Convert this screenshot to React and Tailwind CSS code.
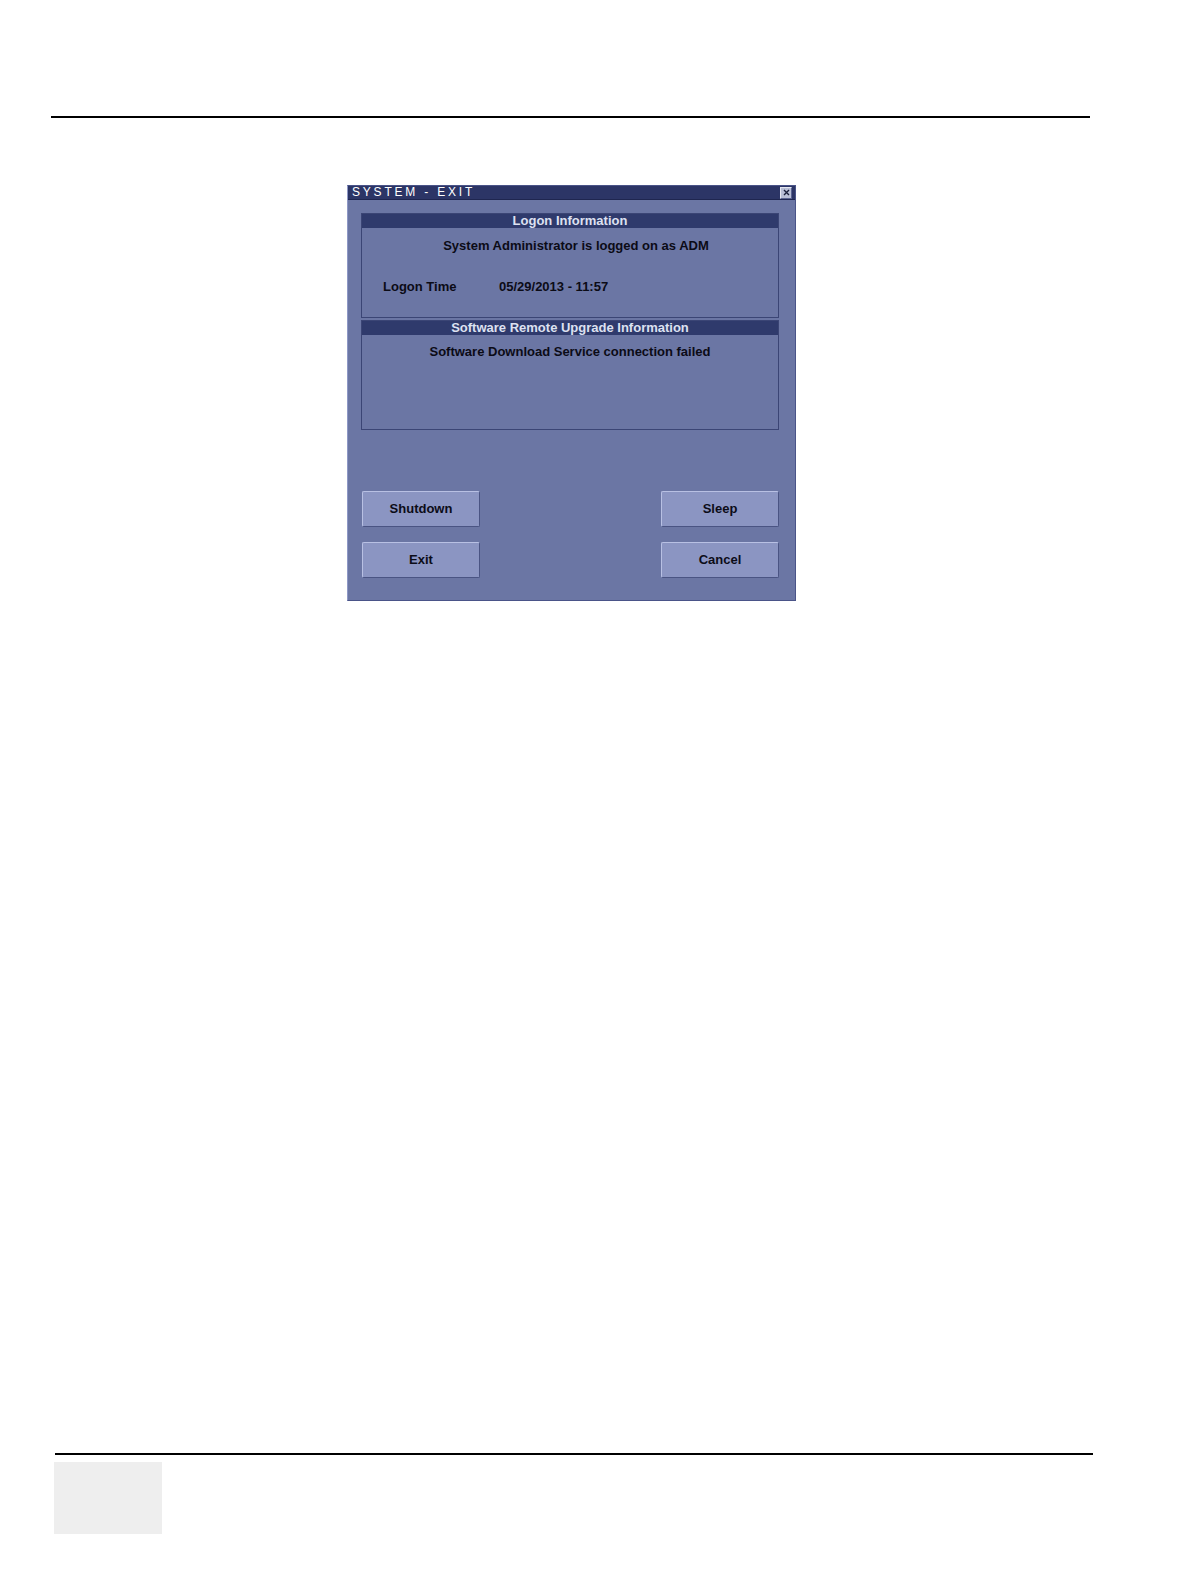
export default function App() {
  const font = { fontFamily: '"Liberation Sans", Arial, sans-serif' };

  const Section = ({ title, h, children }) => (
    <div className={`w-[418px] ${h} border border-[#3b4575] bg-[#6b76a4] flex flex-col`}>
      <div className="h-[14px] bg-[#2f3a6c] text-[#dde1f1] text-[13px] font-bold leading-[14px] text-center">
        {title}
      </div>
      {children}
    </div>
  );

  const Btn = ({ label }) => (
    <div className="w-[118px] h-[36px] bg-[#8b95c2] border border-t-[#b8c0e3] border-l-[#b8c0e3] border-r-[#4a5483] border-b-[#4a5483] rounded-[2px] flex items-center justify-center text-[13px] font-bold text-[#0c0c18]">
      {label}
    </div>
  );

  return (
    <div className="w-[1190px] h-[1584px] bg-white flex flex-col" style={font}>
      {/* header rule */}
      <div className="mt-[116px] ml-[51px] w-[1039px] h-[2px] bg-black" />

      {/* dialog */}
      <div className="mt-[67px] ml-[347px] w-[449px] h-[416px] border border-[#4a5488] border-l-[#8f98c6] bg-[#6b76a4] flex flex-col">
        <div className="h-[14px] bg-[#2c3566] border-b border-[#1f2650] flex items-center justify-between pl-[4px] pr-[3px]">
          <span className="text-white text-[12px] font-medium leading-[13px] tracking-[2.8px]">SYSTEM - EXIT</span>
          <span className="w-[12px] h-[12px] bg-[#b9bfd6] border border-[#e6e8f2] border-r-[#5a6390] border-b-[#5a6390] flex items-center justify-center">
            <svg width="7" height="7" viewBox="0 0 7 7">
              <path d="M1 1L6 6M6 1L1 6" stroke="#1a1f3a" strokeWidth="1.4" />
            </svg>
          </span>
        </div>

        <div className="pl-[13px] pt-[13px] flex flex-col">
          <Section title="Logon Information" h="h-[105px]">
            <div className="pt-[10px] pl-[12px] text-center text-[13px] leading-[15px] font-bold text-[#0b0b16]">
              System Administrator is logged on as ADM
            </div>
            <div className="mt-[26px] pl-[21px] flex text-[13px] leading-[15px] font-bold text-[#0b0b16]">
              <span className="w-[116px]">Logon Time</span>
              <span>05/29/2013 - 11:57</span>
            </div>
          </Section>
          <div className="mt-[2px]">
            <Section title="Software Remote Upgrade Information" h="h-[110px]">
              <div className="pt-[9px] text-center text-[13px] leading-[15px] font-bold text-[#0b0b16]">
                Software Download Service connection failed
              </div>
            </Section>
          </div>

          <div className="mt-[61px] w-[418px] pl-[1px] flex flex-col gap-[15px]">
            <div className="flex justify-between">
              <Btn label="Shutdown" />
              <Btn label="Sleep" />
            </div>
            <div className="flex justify-between">
              <Btn label="Exit" />
              <Btn label="Cancel" />
            </div>
          </div>
        </div>
      </div>

      {/* footer rule */}
      <div className="mt-[852px] ml-[55px] w-[1038px] h-[2px] bg-black" />
      <div className="mt-[7px] ml-[54px] w-[108px] h-[72px] bg-[#eeeeee]" />
    </div>
  );
}
